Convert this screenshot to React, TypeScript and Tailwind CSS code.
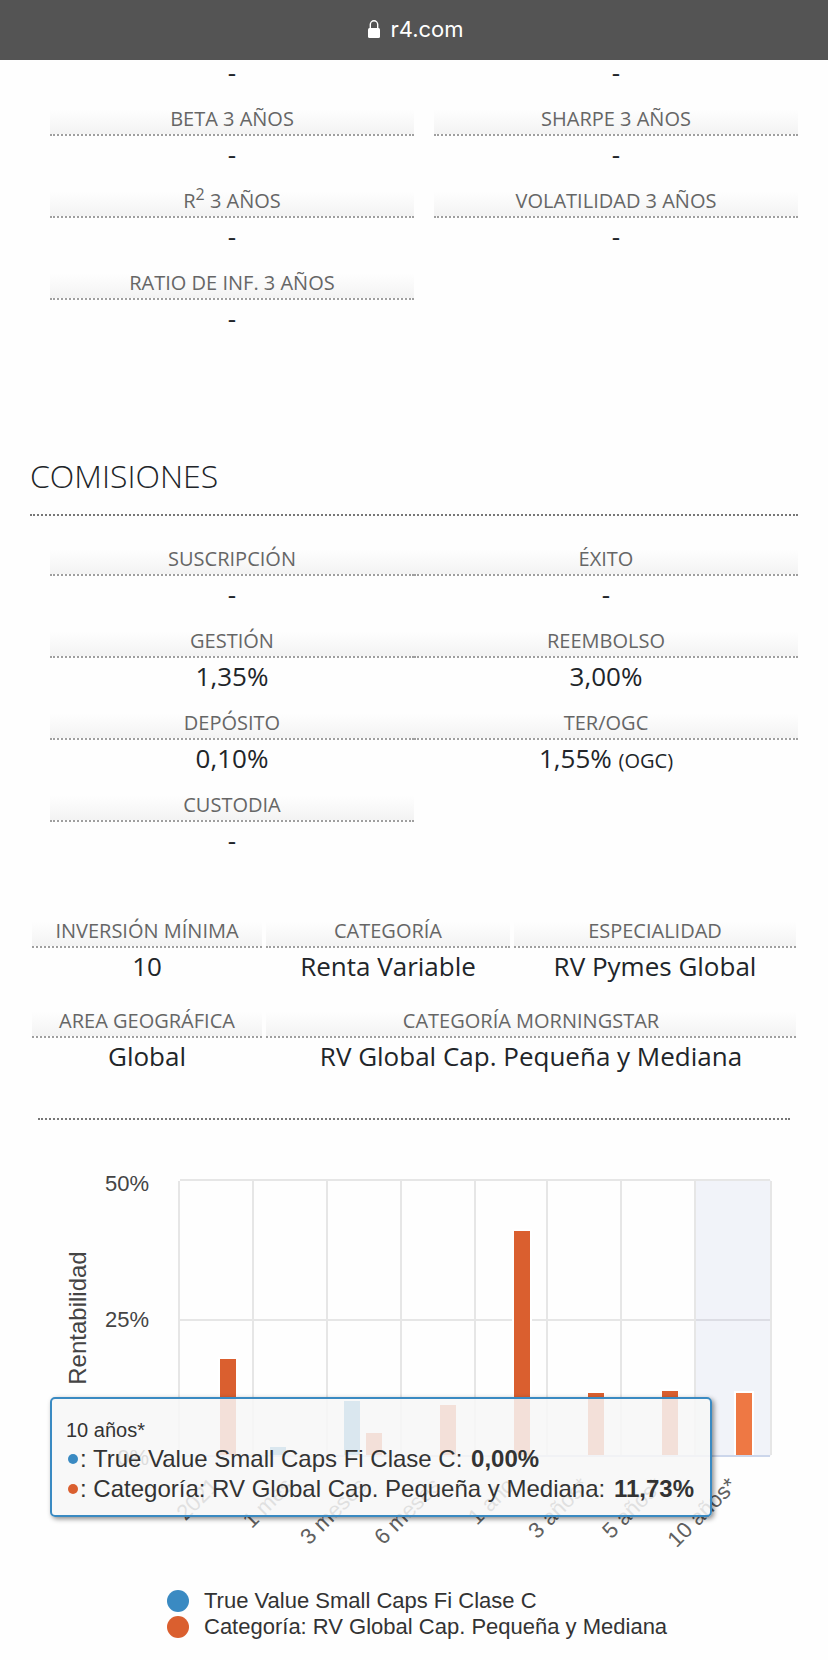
import React from "react";

type Stat = { label: React.ReactNode; value: React.ReactNode };

const ratios: Stat[] = [
  { label: "BETA 3 AÑOS", value: "-" },
  { label: "SHARPE 3 AÑOS", value: "-" },
  {
    label: (
      <>
        R<sup className="text-[16px] leading-none">2</sup> 3 AÑOS
      </>
    ),
    value: "-",
  },
  { label: "VOLATILIDAD 3 AÑOS", value: "-" },
  { label: "RATIO DE INF. 3 AÑOS", value: "-" },
];

const fees: Stat[] = [
  { label: "SUSCRIPCIÓN", value: "-" },
  { label: "ÉXITO", value: "-" },
  { label: "GESTIÓN", value: "1,35%" },
  { label: "REEMBOLSO", value: "3,00%" },
  { label: "DEPÓSITO", value: "0,10%" },
  {
    label: "TER/OGC",
    value: (
      <>
        1,55% <span className="text-[20px] leading-none">(OGC)</span>
      </>
    ),
  },
  { label: "CUSTODIA", value: "-" },
];

const BLUE = "#3a8ac2";
const ORANGE = "#da5f2f";
const ORANGE_HOVER = "#ee7844";

// bar heights in chart units
const periods = [
  { name: "2021", fund: 0, category: 96 },
  { name: "1 mes", fund: 8, category: 0 },
  { name: "3 meses", fund: 54, category: 22 },
  { name: "6 meses", fund: 0, category: 50 },
  { name: "1 año", fund: 0, category: 224 },
  { name: "3 años*", fund: 0, category: 62 },
  { name: "5 años*", fund: 0, category: 64 },
  { name: "10 años*", fund: 0, category: 62 },
];

const gridX = [179, 253, 327, 401, 475, 547, 621, 695, 771];
const ACTIVE = 7;
const BASE = 335;

const yTicks = [
  { label: "50%", y: 71 },
  { label: "25%", y: 207 },
  { label: "0%", y: 345 },
];

const legend = [
  { name: "True Value Small Caps Fi Clase C", value: "0,00%", dot: "bg-[#3a8ac2]" },
  { name: "Categoría: RV Global Cap. Pequeña y Mediana", value: "11,73%", dot: "bg-[#da5f2f]" },
];

function StatItem({ label, value, className = "" }: Stat & { className?: string }) {
  return (
    <div className={`text-center ${className}`}>
      <dt className="border-b-2 border-dotted border-[#9f9f9f] bg-linear-to-b from-[#fefefe] from-20% to-[#f3f3f3] text-[20px] leading-[30px] text-[#666]">
        {label}
      </dt>
      <dd className="text-[26px] leading-[36px] text-[#212529]">{value}</dd>
    </div>
  );
}

function Bar({ x, height, fill }: { x: number; height: number; fill: string }) {
  if (!height) return null;
  return (
    <>
      <rect x={x - 2} y={BASE - height - 2} width={20} height={height + 2} fill="#fff" />
      <rect x={x} y={BASE - height} width={16} height={height} fill={fill} />
    </>
  );
}

function Chart() {
  return (
    <svg
      viewBox="0 0 828 468"
      className="block h-auto w-full font-['Liberation_Sans',Arial,sans-serif]"
      role="img"
      aria-label="Rentabilidad"
    >
      <rect x={696} y={60} width={75} height={276} fill="#f1f3f9" />
      <g stroke="#e6e6e6" strokeWidth={2}>
        <path d="M180 60H770M180 200H770" />
        {gridX.map((x) => (
          <path key={x} d={`M${x} 61V335`} />
        ))}
      </g>
      <path d="M696 200H770" stroke="#dcdde4" strokeWidth={2} />
      <path d="M180 336H770" stroke="#ccd6eb" strokeWidth={2} />
      {periods.map((p, i) => (
        <g key={p.name}>
          <Bar x={196 + i * 74} height={p.fund} fill={BLUE} />
          <Bar
            x={(i < 2 ? 220 : 218) + i * 74}
            height={p.category}
            fill={i === ACTIVE ? ORANGE_HOVER : ORANGE}
          />
        </g>
      ))}
      {yTicks.map((t) => (
        <text key={t.label} x={149} y={t.y} textAnchor="end" fontSize={22} fill="#444">
          {t.label}
        </text>
      ))}
      <text transform="translate(86 198) rotate(-90)" textAnchor="middle" fontSize={24} fill="#444">
        Rentabilidad
      </text>
      {periods.map((p, i) => (
        <text
          key={p.name}
          transform={`translate(${220 + i * 74} 367) rotate(-45)`}
          textAnchor="end"
          fontSize={22}
          fill="#606060"
        >
          {p.name}
        </text>
      ))}
    </svg>
  );
}

export default function App() {
  return (
    <div className="min-h-screen bg-[#fefefe] font-['Open_Sans',sans-serif] text-[#212529]">
      <header className="flex h-[60px] items-center justify-center gap-2.5 bg-[#545454] pb-0.5 pl-1 text-white">
        <svg viewBox="0 0 12 18" className="h-[18px] w-3" aria-hidden="true">
          <path d="M2.3 9V4.6a3.7 3.8 0 0 1 7.4 0V9" fill="none" stroke="#fff" strokeWidth="1.4" />
          <rect x="0" y="8" width="12" height="10" rx="1.5" fill="#fff" />
        </svg>
        <span className="font-[Inter,sans-serif] text-[22px] leading-[28px]">r4.com</span>
      </header>

      <main>
        <section className="pr-[30px] pl-[50px]">
          <div className="grid grid-cols-2 gap-x-5 pb-5 text-center text-[26px] leading-[24px]">
            <span>-</span>
            <span>-</span>
          </div>
          <dl className="grid grid-cols-2 gap-x-5 gap-y-3.5">
            {ratios.map((r, i) => (
              <StatItem key={i} {...r} />
            ))}
          </dl>
        </section>

        <section className="mt-[118px] pr-[30px] pl-[30px]">
          <h2 className="border-b-2 border-dotted border-[#777] pb-4 text-[32px] leading-[44px] font-light">
            COMISIONES
          </h2>
          <dl className="mt-7 grid grid-cols-[364fr_384fr] gap-y-3.5 pl-5">
            {fees.map((f, i) => (
              <StatItem key={i} {...f} />
            ))}
          </dl>
        </section>

        <dl className="mx-8 mt-[58px] grid grid-cols-[230fr_244fr_282fr] gap-x-1 gap-y-[22px]">
          <StatItem label="INVERSIÓN MÍNIMA" value="10" />
          <StatItem label="CATEGORÍA" value="Renta Variable" />
          <StatItem label="ESPECIALIDAD" value="RV Pymes Global" />
          <StatItem label="AREA GEOGRÁFICA" value="Global" />
          <StatItem
            label="CATEGORÍA MORNINGSTAR"
            value="RV Global Cap. Pequeña y Mediana"
            className="col-span-2"
          />
        </dl>

        <hr className="mx-[38px] mt-[44px] border-t-2 border-dotted border-[#777]" />

        <section className="relative font-['Liberation_Sans',Arial,sans-serif] text-[#333]">
          <Chart />

          {/* Tooltip */}
          <div className="absolute top-[277px] left-[50px] rounded-[5px] border-2 border-[#3a8ac2] bg-[#f7f7f7]/85 pt-[17px] pr-4 pb-[11px] pl-3.5 whitespace-nowrap shadow-[2px_2px_5px_rgba(0,0,0,0.45)]">
            <p className="text-[20px] leading-[28px]">10 años*</p>
            {legend.map((l) => (
              <p key={l.name} className="flex items-center text-[24px] leading-[30px]">
                <span className={`mr-0.5 ml-0.5 size-2.5 rounded-full ${l.dot}`} />
                <span>
                  : {l.name}: <b className="ml-0.5">{l.value}</b>
                </span>
              </p>
            ))}
          </div>

          {/* Legend */}
          <ul className="pb-5 pl-[167px]">
            {legend.map((l) => (
              <li key={l.name}>
                <button type="button" className="flex items-center gap-[15px] text-[22px] leading-[26px]">
                  <span className={`size-[22px] rounded-full ${l.dot}`} />
                  {l.name}
                </button>
              </li>
            ))}
          </ul>
        </section>
      </main>
    </div>
  );
}
